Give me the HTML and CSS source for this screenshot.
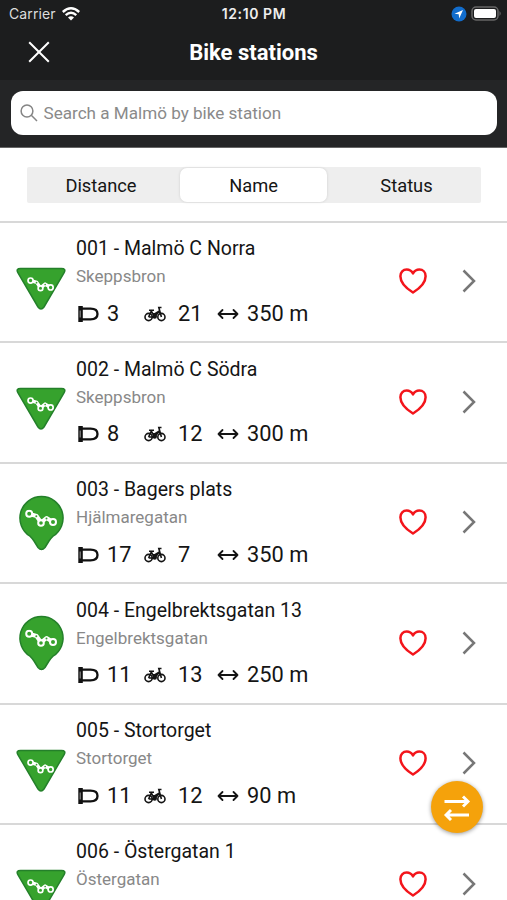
FILE: index.html
```
<!DOCTYPE html>
<html lang="en">
<head>
<meta charset="utf-8">
<title>Bike stations</title>
<link rel="stylesheet" href="styles.css">
</head>
<body>
<svg class="symbols" aria-hidden="true">
  <symbol id="chain" viewBox="0 0 32 18">
    <path d="M4.500 4.500L11.500 6.500L16 13L21.500 8.500L27.500 12.300" fill="none" stroke="#fff" stroke-width="4" stroke-linejoin="round"/>
    <g fill="#36a22d" stroke="#fff" stroke-width="2"><circle cx="4.200" cy="4.300" r="3"/><circle cx="16" cy="13.500" r="2.800"/><circle cx="28" cy="12.500" r="3"/></g>
    <circle cx="11.300" cy="6.800" r="1" fill="#36a22d"/><circle cx="21.500" cy="9" r="1" fill="#36a22d"/>
  </symbol>
  <symbol id="triangle" viewBox="0 0 50 44">
    <path d="M4.500 1.500H45.500Q50.500 1.500 48 5.800L28 40Q25 44 22 40L2 5.800Q-.5 1.500 4.500 1.500Z" fill="#36a22d" stroke="#24802a" stroke-width="1.500"/>
    <use href="#chain" x="11" y="9.500" width="27" height="16"/>
  </symbol>
  <symbol id="drop" viewBox="0 0 50 56">
    <path d="M25.500 1.500A21.500 21.500 0 0 1 37 41.200Q35 43 33 46L29 52.500Q25.500 56.500 22 52.500L18 46Q16 43 14 41.200A21.500 21.500 0 0 1 25.500 1.500Z" fill="#36a22d" stroke="#24802a" stroke-width="1.500"/>
    <use href="#chain" x="9" y="14.500" width="32" height="18"/>
  </symbol>
  <symbol id="dock" viewBox="0 0 22 18">
    <path d="M5 3.700H13.500C18 3.700 20.500 5.700 20.500 9S18 14.300 13.500 14.300H5" fill="none" stroke="#111" stroke-width="2.300"/>
    <path d="M1.300 1H5.800V17H1.300Z" fill="#111"/>
    <path d="M3.200 5.500V12.500" stroke="#888" stroke-width="1.200"/>
  </symbol>
  <symbol id="bike" viewBox="0 0 22 16">
    <g fill="none" stroke="#151515" stroke-width="1.600"><circle cx="4.600" cy="11" r="3.600"/><circle cx="17.400" cy="11" r="3.600"/><path d="M4.600 11L7.300 5L10.500 11H4.600M7.300 6.500L10.500 8L15.500 5L10.500 11M17.400 11L14.800 1.500H17.500M5 4.300H10"/></g>
    <circle cx="10.700" cy="10.500" r="2.300" fill="#151515"/>
  </symbol>
  <symbol id="range" viewBox="0 0 22 12">
    <path d="M1.500 6H20.500M5.500 2L1.500 6L5.500 10M16.500 2L20.500 6L16.500 10" fill="none" stroke="#151515" stroke-width="1.800" stroke-linecap="round" stroke-linejoin="round"/>
  </symbol>
  <symbol id="heart" viewBox="0 0 28 26">
    <path d="M14 24.500C10 22 1.400 15.500 1.400 8.200C1.400 4 4.100 1.600 7.700 1.600C10.500 1.600 12.600 3 14 5.500C15.400 3 17.500 1.600 20.300 1.600C23.900 1.600 26.600 4 26.600 8.200C26.600 15.500 18 22 14 24.500Z" fill="none" stroke="#f3151b" stroke-width="2.500" stroke-linejoin="round"/>
  </symbol>
  <symbol id="chevron" viewBox="0 0 14 24">
    <path d="M1.500 1.500L12 12L1.500 22.500" fill="none" stroke="#777" stroke-width="2.500"/>
  </symbol>
</svg>

<header class="header">
  <div class="status">
    <div class="carrier">Carrier
      <svg width="18" height="14" viewBox="0 0 18 14"><g fill="none" stroke="#fff" stroke-width="2.400"><path d="M.8 5Q9-2.300 17.200 5"/><path d="M3.700 8.200Q9 3.500 14.300 8.200"/></g><path d="M6 10.500Q9 8 12 10.500L9 13.600Z" fill="#fff"/></svg>
    </div>
    <div class="clock">12:10 PM</div>
    <div class="indicators">
      <svg width="16" height="16" viewBox="0 0 16 16"><circle cx="8" cy="8" r="7.500" fill="#126dcc"/><path d="M12 4L3.500 7.800L7.700 8.300L8.200 12.500Z" fill="#fff"/></svg>
      <svg width="31" height="16" viewBox="0 0 31 16"><rect x="1" y="1" width="26" height="13" rx="4" fill="none" stroke="#666" stroke-width="1.500"/><rect x="3" y="3" width="22" height="9" rx="2" fill="#fff"/><path d="M28.500 5Q31 7.500 28.500 10Z" fill="#666"/></svg>
    </div>
  </div>
  <div class="titlebar">
    <svg class="close" viewBox="0 0 22 22"><path d="M1.200 1.200L20.800 20.800M20.800 1.200L1.200 20.800" stroke="#fff" stroke-width="2"/></svg>
    <h1>Bike stations</h1>
  </div>
  <div class="searchbar">
    <div class="search">
      <svg width="18" height="18" viewBox="0 0 18 18"><g fill="none" stroke="#858585" stroke-width="1.500"><circle cx="7" cy="7" r="5.900"/><path d="M11.300 11.300L17 17"/></g></svg>
      <span>Search a Malmö by bike station</span>
    </div>
  </div>
</header>

<nav class="filter">
  <div class="segments"><span>Distance</span><span class="active">Name</span><span>Status</span></div>
</nav>

<main class="stations">
  <article class="station">
    <svg class="pin triangle"><use href="#triangle"/></svg>
    <div class="details"><h2>001 - Malmö C Norra</h2><p>Skeppsbron</p>
      <div class="stats"><svg class="dock"><use href="#dock"/></svg><span>3</span><svg class="bike"><use href="#bike"/></svg><span>21</span><svg class="range"><use href="#range"/></svg><span>350 m</span></div></div>
    <svg class="heart"><use href="#heart"/></svg><svg class="chevron"><use href="#chevron"/></svg>
  </article>
  <article class="station">
    <svg class="pin triangle"><use href="#triangle"/></svg>
    <div class="details"><h2>002 - Malmö C Södra</h2><p>Skeppsbron</p>
      <div class="stats"><svg class="dock"><use href="#dock"/></svg><span>8</span><svg class="bike"><use href="#bike"/></svg><span>12</span><svg class="range"><use href="#range"/></svg><span>300 m</span></div></div>
    <svg class="heart"><use href="#heart"/></svg><svg class="chevron"><use href="#chevron"/></svg>
  </article>
  <article class="station">
    <svg class="pin drop"><use href="#drop"/></svg>
    <div class="details"><h2>003 - Bagers plats</h2><p>Hjälmaregatan</p>
      <div class="stats"><svg class="dock"><use href="#dock"/></svg><span>17</span><svg class="bike"><use href="#bike"/></svg><span>7</span><svg class="range"><use href="#range"/></svg><span>350 m</span></div></div>
    <svg class="heart"><use href="#heart"/></svg><svg class="chevron"><use href="#chevron"/></svg>
  </article>
  <article class="station">
    <svg class="pin drop"><use href="#drop"/></svg>
    <div class="details"><h2>004 - Engelbrektsgatan 13</h2><p>Engelbrektsgatan</p>
      <div class="stats"><svg class="dock"><use href="#dock"/></svg><span>11</span><svg class="bike"><use href="#bike"/></svg><span>13</span><svg class="range"><use href="#range"/></svg><span>250 m</span></div></div>
    <svg class="heart"><use href="#heart"/></svg><svg class="chevron"><use href="#chevron"/></svg>
  </article>
  <article class="station">
    <svg class="pin triangle"><use href="#triangle"/></svg>
    <div class="details"><h2>005 - Stortorget</h2><p>Stortorget</p>
      <div class="stats"><svg class="dock"><use href="#dock"/></svg><span>11</span><svg class="bike"><use href="#bike"/></svg><span>12</span><svg class="range"><use href="#range"/></svg><span>90 m</span></div></div>
    <svg class="heart"><use href="#heart"/></svg><svg class="chevron"><use href="#chevron"/></svg>
  </article>
  <article class="station">
    <svg class="pin triangle"><use href="#triangle"/></svg>
    <div class="details"><h2>006 - Östergatan 1</h2><p>Östergatan</p></div>
    <svg class="heart"><use href="#heart"/></svg><svg class="chevron"><use href="#chevron"/></svg>
  </article>
</main>

<button class="swap" aria-label="Swap">
  <svg width="28" height="28" viewBox="0 0 28 28"><path d="M1.500 8.500H24M20 3.500L25 8.500L20 13.500M26 22H4M8 17L3 22L8 27" fill="none" stroke="#fff" stroke-width="2.900"/></svg>
</button>
</body>
</html>
```
FILE: styles.css
```
* { box-sizing: border-box; }
body {
  margin: 0;
  height: 900px;
  overflow: hidden;
  position: relative;
  display: flex;
  flex-direction: column;
  background: #fff;
  color: #151515;
  font-family: Roboto, "Liberation Sans", sans-serif;
}
svg { display: block; }
h1, h2, p { margin: 0; }
.symbols { position: absolute; width: 0; height: 0; }

.header { flex: none; height: 148px; background: #1c1d1e; color: #fff; border-bottom: 1px solid #666; }
.status {
  display: grid;
  grid-template-columns: 1fr auto 1fr;
  height: 27px;
  padding: 0 5px 0 9px;
  align-items: center;
  font-family: Inter, sans-serif;
  font-size: 14px;
}
.carrier { display: flex; align-items: center; gap: 6px; color: #ddd; letter-spacing: 0.1px; }
.clock { margin-left: -3px; font-weight: 600; font-size: 14px; letter-spacing: 0.6px; color: #eee; }
.indicators { display: flex; justify-content: flex-end; align-items: center; gap: 4px; }
.titlebar {
  display: grid;
  grid-template-columns: 50px 1fr 50px;
  height: 53px;
  align-items: center;
}
.close { width: 22px; height: 22px; margin: 0 0 3px 28px; }
h1 { text-align: center; font-size: 22px; line-height: 28px; font-weight: 700; padding-bottom: 2px; }
.searchbar { height: 67px; padding: 11px 10px 12px 11px; background: #242526; }
.search {
  display: flex;
  align-items: center;
  gap: 6px;
  height: 44px;
  padding-left: 8.5px;
  border-radius: 12px;
  background: #fff;
  color: #8a8a8a;
  font-size: 17.1px;
}

.filter { flex: none; height: 72.5px; padding: 19px 26px 0 27px; }
.segments {
  display: grid;
  grid-template-columns: 153px 147px 1fr;
  height: 36px;
  background: #eee;
  border-radius: 2px;
  font-size: 18.3px;
  line-height: 37px;
  text-align: center;
}
.segments span:first-child { padding-right: 5px; }
.segments span:last-child { padding-left: 5px; }
.segments .active { height: 34px; margin: 1px 0; line-height: 35px; background: #fff; border-radius: 7px; box-shadow: 0 0 3px #0002; }

.stations { flex: none; }
.station {
  display: grid;
  grid-template-columns: 76px 1fr 63px 14px;
  height: 120.5px;
  padding-right: 31px;
  border-top: 2px solid #d8d8d8;
}
.pin { margin-left: 16px; width: 50px; }
.triangle { height: 44px; margin-top: 44px; }
.drop { height: 56px; margin-top: 31px; }
.details { padding-top: 14.5px; }
h2 { font-size: 19.5px; line-height: 24px; font-weight: 400; white-space: nowrap; }
p { margin-top: 3px; font-size: 17px; line-height: 24px; color: #888; }
.stats {
  display: grid;
  grid-template-columns: 31px 37px 34px 39px 30px auto;
  align-items: center;
  justify-content: start;
  height: 28px;
  margin-top: 11.5px;
  font-size: 21.8px;
  line-height: 28px;
}
.dock { width: 22px; height: 18px; margin-left: 1px; }
.bike { width: 22px; height: 16px; }
.range { width: 22px; height: 12px; }
.heart { width: 28px; height: 26px; margin-top: 45.5px; }
.chevron { width: 14px; height: 24px; margin-top: 46.5px; }

.swap {
  position: absolute;
  left: 431px;
  top: 781px;
  width: 52px;
  height: 52px;
  display: grid;
  place-items: center;
  padding: 0;
  border: 0;
  border-radius: 50%;
  background: #f5a20b;
  box-shadow: 0 1px 4px #0006;
}
```
